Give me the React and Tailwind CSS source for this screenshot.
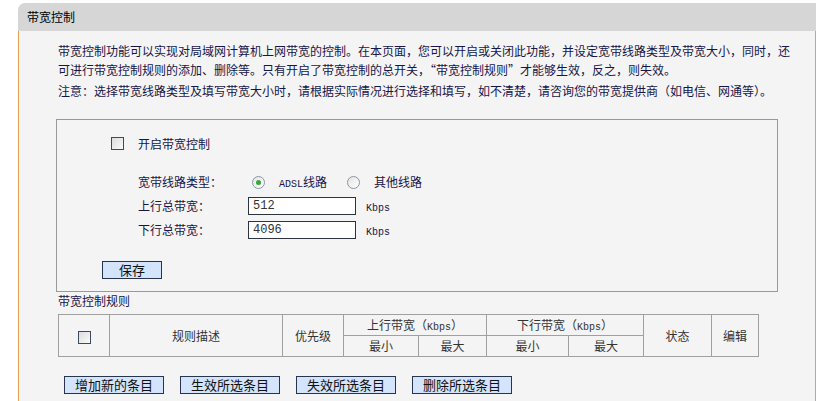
import React from 'react'

const CJK = { fontFamily: '"Noto Sans CJK SC", "Liberation Sans", sans-serif' }

// half-width latin like the old bitmap font
function Lat({ children }) {
  return <span className="font-['Liberation_Mono',monospace] text-[10px]">{children}</span>
}

function Box() {
  return <span className="inline-block w-[13px] h-[13px] border border-[#3c4a5c] bg-gradient-to-br from-[#dcdcdc] to-[#fafafa]" />
}

function Radio({ on }) {
  return (
    <span className="inline-flex w-[13px] h-[13px] rounded-full border border-[#8a96a4] bg-gradient-to-br from-[#e4e4e4] to-white items-center justify-center">
      {on && <span className="w-[5px] h-[5px] rounded-full bg-[#3aa43a]" />}
    </span>
  )
}

function Btn({ children, w = 'w-[100px]' }) {
  return (
    <button className={`${w} h-[18px] border border-[#26344e] bg-[#d3e4fb] text-[13px] leading-[16px] text-[#111]`}>
      {children}
    </button>
  )
}

const COLS = [51, 173, 61, 75, 68, 82, 75, 68, 47]

export default function App() {
  return (
    <div className="w-[826px] h-[401px] overflow-hidden bg-white pt-[3px] pl-[18px] text-[12px]" style={CJK}>
      <div className="w-[798px]">
        {/* title bar */}
        <div className="h-[28px] bg-[#d6d6d6] rounded-tl-[7px] flex items-center pl-[9px] text-black">
          带宽控制
        </div>

        {/* body */}
        <div className="h-[400px] bg-[#f4f4f4] border-x border-[#e0a24e] pt-[10px] pl-[37px] text-[#16164a]">
          <div className="pl-[2px] w-[740px] leading-[19px]">
            <p>带宽控制功能可以实现对局域网计算机上网带宽的控制。在本页面，您可以开启或关闭此功能，并设定宽带线路类型及带宽大小，同时，还可进行带宽控制规则的添加、删除等。只有开启了带宽控制的总开关，“带宽控制规则”才能够生效，反之，则失效。</p>
            <p className="mt-[2px] whitespace-nowrap">注意：选择带宽线路类型及填写带宽大小时，请根据实际情况进行选择和填写，如不清楚，请咨询您的带宽提供商（如电信、网通等）。</p>
          </div>

          {/* settings box */}
          <div className="mt-[19px] w-[722px] border border-[#999] pb-[12px]">
            <div className="mt-[17px] h-[13px] flex items-center gap-[14px] pl-[54px]">
              <Box />
              <span>开启带宽控制</span>
            </div>

            <div className="mt-[22px] h-[20px] flex items-center pl-[81px]">
              <span className="w-[114px]">宽带线路类型：</span>
              <Radio on />
              <span className="ml-[14px] w-[68px]"><Lat>ADSL</Lat>线路</span>
              <Radio />
              <span className="ml-[14px]">其他线路</span>
            </div>

            <div className="mt-[4px] h-[20px] flex items-center pl-[81px]">
              <span className="w-[110px]">上行总带宽：</span>
              <div className="w-[108px] h-[18px] border border-[#2c3440] bg-white pl-[4px] font-['Liberation_Mono',monospace] text-[12px] leading-[16px] text-[#333]">512</div>
              <span className="ml-[10px]"><Lat>Kbps</Lat></span>
            </div>

            <div className="mt-[4px] h-[20px] flex items-center pl-[81px]">
              <span className="w-[110px]">下行总带宽：</span>
              <div className="w-[108px] h-[18px] border border-[#2c3440] bg-white pl-[4px] font-['Liberation_Mono',monospace] text-[12px] leading-[16px] text-[#333]">4096</div>
              <span className="ml-[10px]"><Lat>Kbps</Lat></span>
            </div>

            <div className="mt-[21px] pl-[45px] flex">
              <Btn w="w-[60px]">保存</Btn>
            </div>
          </div>

          {/* rules */}
          <div className="pl-[2px]">
            <div className="h-[16px] leading-[16px] mt-[1px]">带宽控制规则</div>
            <table className="mt-[5px] w-[700px] table-fixed border-collapse text-[#333]">
              <colgroup>
                {COLS.map((w, i) => <col key={i} style={{ width: w }} />)}
              </colgroup>
              <tbody>
                <tr className="h-[21px]">
                  <td rowSpan={2} className="border border-[#a0a0a0] text-center align-middle">
                    <span className="inline-flex align-middle"><Box /></span>
                  </td>
                  <td rowSpan={2} className="border border-[#a0a0a0] text-center">规则描述</td>
                  <td rowSpan={2} className="border border-[#a0a0a0] text-center">优先级</td>
                  <td colSpan={2} className="border border-[#a0a0a0] text-center">上行带宽（<Lat>Kbps</Lat>）</td>
                  <td colSpan={2} className="border border-[#a0a0a0] text-center">下行带宽（<Lat>Kbps</Lat>）</td>
                  <td rowSpan={2} className="border border-[#a0a0a0] text-center">状态</td>
                  <td rowSpan={2} className="border border-[#a0a0a0] text-center">编辑</td>
                </tr>
                <tr className="h-[21px]">
                  <td className="border border-[#a0a0a0] text-center">最小</td>
                  <td className="border border-[#a0a0a0] text-center">最大</td>
                  <td className="border border-[#a0a0a0] text-center">最小</td>
                  <td className="border border-[#a0a0a0] text-center">最大</td>
                </tr>
              </tbody>
            </table>

            <div className="mt-[19px] pl-[6px] flex gap-[16px]">
              <Btn>增加新的条目</Btn>
              <Btn>生效所选条目</Btn>
              <Btn>失效所选条目</Btn>
              <Btn>删除所选条目</Btn>
            </div>
          </div>
        </div>
      </div>
    </div>
  )
}
